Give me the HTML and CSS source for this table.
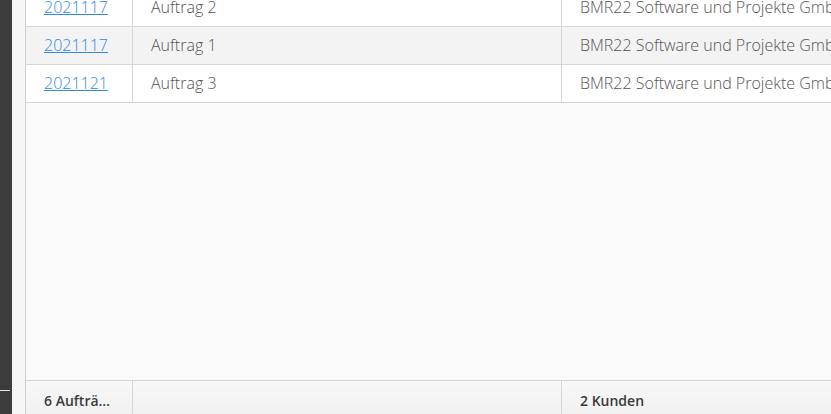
FILE: index.html
```html
<!DOCTYPE html>
<html lang="de">
<head>
    <meta charset="UTF-8">
    <title>Aufträge</title>
    <link rel="stylesheet" href="styles.css">
</head>
<body>
    <div class="page">
        <aside class="side">
            <div class="side_dark">
                <span class="side_mark"></span>
            </div>
            <div class="side_light"></div>
        </aside>

        <main class="grid">
            <div class="grid_body">
                <div class="row">
                    <div class="cell c1"><a href="#">2021117</a></div>
                    <div class="cell c2">Auftrag 2</div>
                    <div class="cell c3">BMR22 Software und Projekte GmbH</div>
                </div>
                <div class="row alt">
                    <div class="cell c1"><a href="#">2021117</a></div>
                    <div class="cell c2">Auftrag 1</div>
                    <div class="cell c3">BMR22 Software und Projekte GmbH</div>
                </div>
                <div class="row">
                    <div class="cell c1"><a href="#">2021121</a></div>
                    <div class="cell c2">Auftrag 3</div>
                    <div class="cell c3">BMR22 Software und Projekte GmbH</div>
                </div>
            </div>
            <div class="grid_foot">
                <div class="cell c1">6 Aufträge</div>
                <div class="cell c2"></div>
                <div class="cell c3">2 Kunden</div>
            </div>
        </main>
    </div>
</body>
</html>
```

FILE: styles.css
```css
* {
    padding: 0;
    margin: 0;
    box-sizing: border-box;
}
body {
    font-family: 'Open Sans', sans-serif;
    font-size: 16px;
    font-weight: 300;
    color: #555;
    background: #fff;
    overflow: hidden;
}
a {
    color: #2f88e6;
    text-decoration: underline;
}
.page {
    display: flex;
    width: 831px;
    height: 414px;
    overflow: hidden;
}
.side {
    display: flex;
    flex: 0 0 26px;
    border-right: 1px solid #cfcfcf;
}
.side_dark {
    display: flex;
    flex-direction: column;
    justify-content: flex-end;
    width: 12px;
    padding-bottom: 23px;
    background: #3c3c3c;
}
.side_mark {
    display: block;
    width: 10px;
    height: 1px;
    background: #e6e6e6;
}
.side_light {
    flex: 1;
    background: #f6f6f6;
}
.grid {
    display: flex;
    flex-direction: column;
    flex: 1;
    min-width: 0;
}
.grid_body {
    flex: 1;
    margin-top: -11px;
    background: #f9f9f9;
    border-bottom: 1px solid #d3d3d3;
}
.row {
    display: flex;
    height: 38px;
    background: #fff;
    border-bottom: 1px solid #d6d6d6;
}
.row.alt {
    background: #f3f3f3;
}
.cell {
    padding: 0 18px;
    line-height: 37px;
    white-space: nowrap;
    overflow: hidden;
    text-overflow: ellipsis;
}
.c1 {
    flex: 0 0 107px;
    border-right: 1px solid #d6d6d6;
}
.c2 {
    flex: 0 0 429px;
    border-right: 1px solid #d6d6d6;
}
.c3 {
    flex: 1;
    text-overflow: clip;
    padding-right: 0;
}
.grid_foot {
    display: flex;
    height: 33px;
    background: linear-gradient(#f8f8f8, #f1f1f1);
}
.grid_foot .cell {
    font-size: 14px;
    font-weight: 600;
    color: #3a3a3a;
    line-height: 33px;
    padding-top: 3px;
}
.grid_foot .c1 {
    text-overflow: ellipsis;
    padding-right: 22px;
}
```
